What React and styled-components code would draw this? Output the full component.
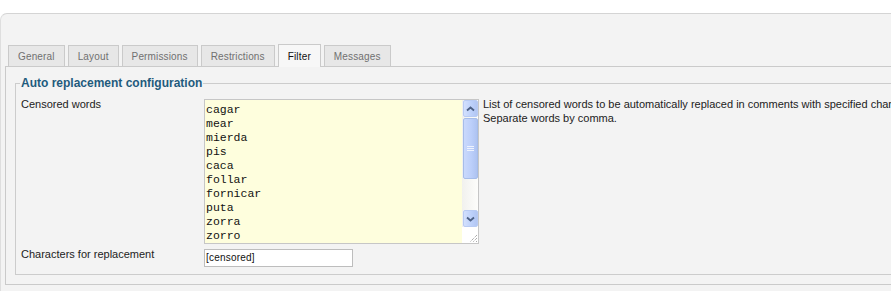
import React from "react";
import styled, { createGlobalStyle } from "styled-components";

const GlobalStyle = createGlobalStyle`
  html, body {
    margin: 0;
    padding: 0;
    background: #fff;
    overflow: hidden;
  }
  body {
    font-family: "Liberation Sans", Arial, sans-serif;
  }
`;

const Page = styled.div`
  width: 891px;
  height: 291px;
  overflow: hidden;
  padding-top: 13px;
  box-sizing: border-box;
`;

const Frame = styled.div`
  width: 1100px;
  height: 100%;
  box-sizing: border-box;
  border-top: 1px solid #d4d4d4;
  border-left: 1px solid #dedede;
  border-top-left-radius: 7px;
  background: #f3f3f3;
  padding: 30px 0 0 4px;
`;

const TabBar = styled.div`
  display: flex;
  align-items: flex-end;
  gap: 3px;
  padding-left: 3px;
  margin-bottom: -1px;
  position: relative;
  z-index: 1;
`;

const Tab = styled.div`
  box-sizing: border-box;
  height: ${(p) => (p.$active ? 23 : 22)}px;
  padding: 0 9px;
  display: flex;
  align-items: center;
  border: 1px solid #cacaca;
  border-bottom: ${(p) => (p.$active ? "none" : "1px solid #cacaca")};
  background: ${(p) => (p.$active ? "#f7f7f7" : "#e7e7e7")};
  color: ${(p) => (p.$active ? "#111" : "#707070")};
  font-size: 10px;
  letter-spacing: 0.15px;
  padding-top: ${(p) => (p.$active ? 1 : 0)}px;
`;

const Panel = styled.div`
  border: 1px solid #cacaca;
  background: #f3f3f3;
  padding: 8px 0 9px 9px;
`;

const Box = styled.fieldset`
  margin: 0;
  min-width: 0;
  border: 1px solid #cccccc;
  padding: 6px 5px 7px 4px;
`;

const Legend = styled.legend`
  padding: 0 1px;
  font-size: 12px;
  line-height: 16px;
  font-weight: bold;
  color: #1f5b7d;
`;

const Row = styled.div`
  display: grid;
  grid-template-columns: 184px auto 1fr;
  align-items: start;
  & + & {
    margin-top: 3px;
  }
`;

const Label = styled.div`
  padding-left: 1px;
  font-size: 11px;
  line-height: 14px;
  color: #222;
`;

const Note = styled.div`
  margin-left: 4px;
  font-size: 11px;
  line-height: 14px;
  color: #222;
  white-space: nowrap;
`;

const TextBox = styled.div`
  margin-top: 2px;
  width: 275px;
  height: 145px;
  box-sizing: border-box;
  border: 1px solid #c6c6c6;
  background: #fefedd;
  display: flex;
  overflow: hidden;
`;

const Lines = styled.div`
  flex: 1;
  padding: 3px 0 0 1px;
  font-family: "Liberation Mono", "Courier New", monospace;
  font-size: 11.5px;
  line-height: 14px;
  color: #111;
  white-space: pre;
`;

const ScrollBar = styled.div`
  width: 16px;
  display: flex;
  flex-direction: column;
  background: linear-gradient(to right, #f1f1ee, #fdfdfb);
`;

const ArrowButton = styled.div`
  box-sizing: border-box;
  height: 17px;
  margin: 0 0 0 1px;
  border: 1px solid #b8cbf3;
  border-radius: 2px;
  background: linear-gradient(to right, #d3e0fd, #bcd0fa 60%, #b2c6f3);
  display: flex;
  align-items: center;
  justify-content: center;
`;

const Thumb = styled.div`
  box-sizing: border-box;
  height: 61px;
  margin: 1px 0 0 1px;
  border: 1px solid #a6bde9;
  border-radius: 2px;
  background: linear-gradient(to right, #cad9fc, #bccffa 55%, #aec3f1);
  display: flex;
  align-items: center;
  justify-content: center;
`;

const Track = styled.div`
  flex: 1;
`;

const Grip = styled.div`
  height: 16px;
  background: #fff;
  display: flex;
  align-items: flex-end;
  justify-content: flex-end;
`;

const Input = styled.div`
  margin-top: 2px;
  width: 149px;
  height: 18px;
  box-sizing: border-box;
  border: 1px solid #bdbdbd;
  background: #fff;
  padding-left: 1px;
  font-size: 10px;
  letter-spacing: 0.2px;
  line-height: 16px;
  color: #111;
`;

const Chevron = ({ down }) => (
  <svg width="9" height="6" viewBox="0 0 9 6">
    <path
      d={down ? "M1 1.5 L4.5 4.5 L8 1.5" : "M1 4.5 L4.5 1.5 L8 4.5"}
      fill="none"
      stroke="#4d6185"
      strokeWidth="1.8"
    />
  </svg>
);

const GripLines = () => (
  <svg width="9" height="9" viewBox="0 0 9 9">
    <path d="M8 1 L1 8 M8 4 L4 8 M8 7 L7 8" stroke="#8a8a8a" strokeWidth="1" strokeDasharray="1 1" />
  </svg>
);

const ThumbLines = () => (
  <svg width="7" height="7" viewBox="0 0 7 7">
    <path d="M0 1.5 H7 M0 3.5 H7 M0 5.5 H7" stroke="#eef3fe" strokeWidth="1" />
  </svg>
);

const tabs = ["General", "Layout", "Permissions", "Restrictions", "Filter", "Messages"];

const words = ["cagar", "mear", "mierda", "pis", "caca", "follar", "fornicar", "puta", "zorra", "zorro"];

export default function App() {
  return (
    <>
      <GlobalStyle />
      <Page>
        <Frame>
          <TabBar>
            {tabs.map((t) => (
              <Tab key={t} $active={t === "Filter"}>
                {t}
              </Tab>
            ))}
          </TabBar>
          <Panel>
            <Box>
              <Legend>Auto replacement configuration</Legend>
              <Row>
                <Label>Censored words</Label>
                <TextBox>
                  <Lines>{words.join("\n")}</Lines>
                  <ScrollBar>
                    <ArrowButton>
                      <Chevron />
                    </ArrowButton>
                    <Thumb>
                      <ThumbLines />
                    </Thumb>
                    <Track />
                    <ArrowButton>
                      <Chevron down />
                    </ArrowButton>
                    <Grip>
                      <GripLines />
                    </Grip>
                  </ScrollBar>
                </TextBox>
                <Note>
                  List of censored words to be automatically replaced in comments with specified characters.
                  <br />
                  Separate words by comma.
                </Note>
              </Row>
              <Row>
                <Label>Characters for replacement</Label>
                <Input>[censored]</Input>
              </Row>
            </Box>
          </Panel>
        </Frame>
      </Page>
    </>
  );
}
